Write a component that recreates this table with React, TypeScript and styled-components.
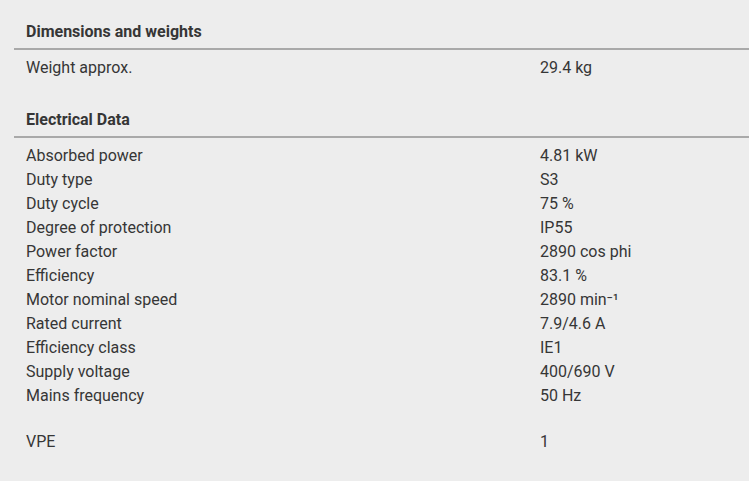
import React from "react";
import styled, { createGlobalStyle } from "styled-components";

const GlobalStyle = createGlobalStyle`
	body {
		margin: 0;
		background: #ededed;
		font-family: Roboto, "Open Sans", sans-serif;
		color: #363636;
	}
`;

const Page = styled.div`
	padding: 0 0 0 14px;
	overflow: hidden;
`;

const Section = styled.section`
	& + & {
		margin-top: 8px;
	}
`;

const Heading = styled.h3`
	margin: 0;
	padding: 20px 12px 4px;
	font-size: 16px;
	line-height: 24px;
	font-weight: 700;
	color: #363636;
	border-bottom: 2px solid #a9a9a9;
`;

const Table = styled.div`
	display: grid;
	grid-template-columns: 514px 1fr;
	padding: 6px 12px 0;
`;

const Cell = styled.div<{ $gap?: boolean }>`
	font-size: 16px;
	line-height: 24px;
	white-space: nowrap;
	margin-top: ${(p) => (p.$gap ? "22px" : "0")};
`;

type Row = { label: string; value: string; gap?: boolean };

const dimensions: Row[] = [{ label: "Weight approx.", value: "29.4 kg" }];

const electrical: Row[] = [
	{ label: "Absorbed power", value: "4.81 kW" },
	{ label: "Duty type", value: "S3" },
	{ label: "Duty cycle", value: "75 %" },
	{ label: "Degree of protection", value: "IP55" },
	{ label: "Power factor", value: "2890 cos phi" },
	{ label: "Efficiency", value: "83.1 %" },
	{ label: "Motor nominal speed", value: "2890 min⁻¹" },
	{ label: "Rated current", value: "7.9/4.6 A" },
	{ label: "Efficiency class", value: "IE1" },
	{ label: "Supply voltage", value: "400/690 V" },
	{ label: "Mains frequency", value: "50 Hz" },
	{ label: "VPE", value: "1", gap: true },
];

function DataTable({ rows }: { rows: Row[] }) {
	return (
		<Table>
			{rows.map((r) => (
				<React.Fragment key={r.label}>
					<Cell $gap={r.gap}>{r.label}</Cell>
					<Cell $gap={r.gap}>{r.value}</Cell>
				</React.Fragment>
			))}
		</Table>
	);
}

export default function App() {
	return (
		<>
			<GlobalStyle />
			<Page>
				<Section>
					<Heading>Dimensions and weights</Heading>
					<DataTable rows={dimensions} />
				</Section>
				<Section>
					<Heading>Electrical Data</Heading>
					<DataTable rows={electrical} />
				</Section>
			</Page>
		</>
	);
}
